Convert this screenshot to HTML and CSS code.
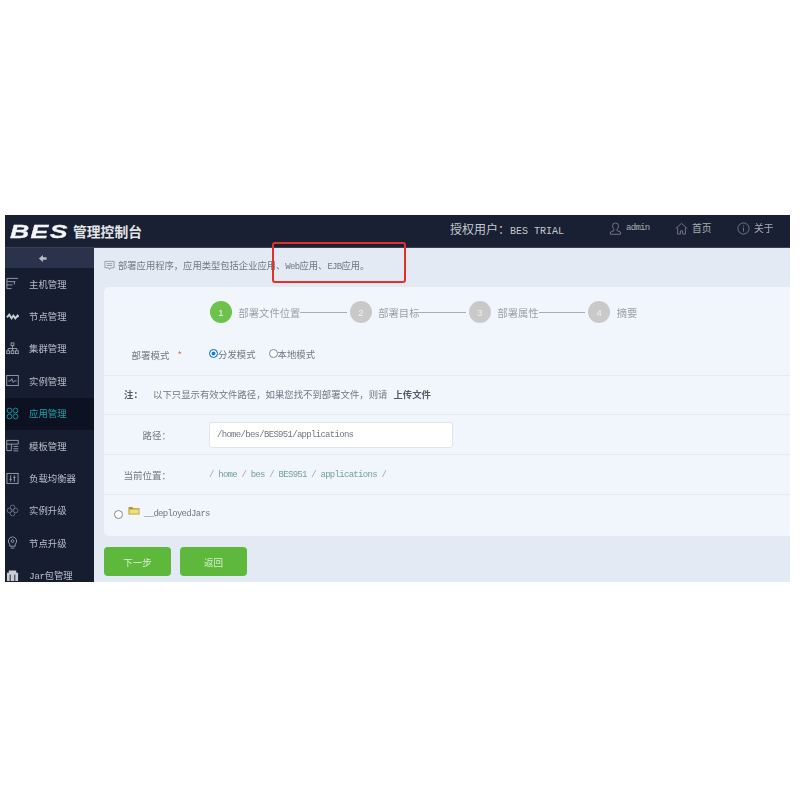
FILE: index.html
```html
<!DOCTYPE html>
<html lang="zh-CN">
<head>
<meta charset="utf-8">
<title>BES 管理控制台</title>
<link rel="stylesheet" href="styles.css">
</head>
<body>
<div class="frame">
  <header class="top">
    <div class="brand"><span class="logo">BES</span><span class="brand-name">管理控制台</span></div>
    <div class="licence">授权用户：<span class="lat-lg">BES TRIAL</span></div>
    <div class="top-link link-user">
      <svg class="ti" viewBox="0 0 14 14"><path d="M7 1a3.2 3.2 0 0 0-3.2 3.2c0 1.6.7 3 1.6 3.8v1.3L1.500 10.800v2.400h11v-2.400L8.600 9.300V8c.9-.8 1.600-2.200 1.600-3.800A3.200 3.200 0 0 0 7 1z"/></svg>
      <span class="lat">admin</span>
    </div>
    <div class="top-link link-home">
      <svg class="ti" viewBox="0 0 14 14"><path d="M.8 7 7 1.500 13.200 7M2.800 6v7h3V9.500h2.400V13h3V6"/></svg>
      <span>首页</span>
    </div>
    <div class="top-link link-about">
      <svg class="ti" viewBox="0 0 14 14"><circle cx="7" cy="7" r="6"/><path d="M7 6v4.200M7 3.600v1.200"/></svg>
      <span>关于</span>
    </div>
  </header>
  <div class="body-row">
    <nav class="side">
      <div class="collapse"><svg class="back" viewBox="0 0 10 10"><path d="M5.500 1 1 5l4.500 4V6.500h4v-3h-4z"/></svg></div>
      <a class="nav-item"><svg class="ni" viewBox="0 0 14 14"><path d="M1 1.500h12M1 1.500v11h5M1 5h9M1 8.500h6M9 5v3"/></svg><span>主机管理</span></a>
      <a class="nav-item"><svg class="ni filled" viewBox="0 0 14 14"><path d="M1 8l2.500-3 2.500 4 2-3 2 3 2.500-3 1 1.500"/></svg><span>节点管理</span></a>
      <a class="nav-item"><svg class="ni" viewBox="0 0 14 14"><rect x="5.500" y="1" width="3" height="3"/><rect x=".8" y="9.500" width="3" height="3"/><rect x="5.500" y="9.500" width="3" height="3"/><rect x="10.200" y="9.500" width="3" height="3"/><path d="M7 4v5.500M2.300 9.500V7h9.400v2.500"/></svg><span>集群管理</span></a>
      <a class="nav-item"><svg class="ni" viewBox="0 0 14 14"><rect x=".8" y="1.500" width="12.400" height="11"/><path d="M2.500 7.500h2.500l1.300-2.500 1.500 4 1.200-1.500h2.500"/></svg><span>实例管理</span></a>
      <a class="nav-item active"><svg class="ni" viewBox="0 0 14 14"><circle cx="3.800" cy="3.800" r="2.600"/><circle cx="10.200" cy="3.800" r="2.600"/><circle cx="3.800" cy="10.200" r="2.600"/><circle cx="10.200" cy="10.200" r="2.600"/></svg><span>应用管理</span></a>
      <a class="nav-item"><svg class="ni" viewBox="0 0 14 14"><path d="M.8 1.500h12.400v4H.8zM.8 5.500v7h5v-7M8 8h5.200M8 10.500h5.200M8 12.800h5.200"/></svg><span>模板管理</span></a>
      <a class="nav-item"><svg class="ni" viewBox="0 0 14 14"><rect x="1" y="1.500" width="12" height="11"/><path d="M5 3.500v7M9 3.500v7M3.800 8h2.400M7.800 6h2.400"/></svg><span>负载均衡器</span></a>
      <a class="nav-item"><svg class="ni dim" viewBox="0 0 14 14"><circle cx="7" cy="3.700" r="2.500"/><circle cx="7" cy="10.300" r="2.500"/><circle cx="3.700" cy="7" r="2.500"/><circle cx="10.300" cy="7" r="2.500"/></svg><span>实例升级</span></a>
      <a class="nav-item"><svg class="ni" viewBox="0 0 14 14"><path d="M7 1a4.500 4.500 0 0 0-3 7.800V11h6V8.800A4.500 4.500 0 0 0 7 1zM5 13h4"/><circle cx="7" cy="5.500" r="1.500"/></svg><span>节点升级</span></a>
      <a class="nav-item"><svg class="ni solid" viewBox="0 0 14 14"><path d="M1 4h12v9H1zM3 1.500h8V4H3z"/><path class="gap" d="M4.500 6v7M9.500 6v7"/></svg><span><span class="lat-nav">Jar</span>包管理</span></a>
    </nav>
    <main class="content">
      <div class="notice">
        <svg class="notice-ico" viewBox="0 0 12 12"><path d="M1 1.500h10v7H7L6 10.500 5 8.500H1zM3 4h6M3 6h6"/></svg>
        <span>部署应用程序，应用类型包括企业应用、<span class="lat">Web</span>应用、<span class="lat">EJB</span>应用。</span>
      </div>
      <section class="card">
        <div class="steps">
          <span class="dot on">1</span><span class="step-text">部署文件位置</span><span class="line"></span>
          <span class="dot">2</span><span class="step-text">部署目标</span><span class="line"></span>
          <span class="dot">3</span><span class="step-text">部署属性</span><span class="line"></span>
          <span class="dot">4</span><span class="step-text">摘要</span>
        </div>
        <div class="row row-mode">
          <div class="label mode-label">部署模式<span class="star">*</span></div>
          <div class="radios">
            <span class="radio checked"></span><span class="radio-text">分发模式</span>
            <span class="radio second"></span><span class="radio-text">本地模式</span>
          </div>
        </div>
        <div class="row row-note">
          <b class="note-tag">注：</b>
          <span>以下只显示有效文件路径，如果您找不到部署文件，则请</span>
          <b class="upload">上传文件</b>
        </div>
        <div class="row row-path">
          <div class="label">路径：</div>
          <div class="path-input"><span class="lat">/home/bes/BES951/applications</span></div>
        </div>
        <div class="row row-crumb">
          <div class="label">当前位置：</div>
          <div class="crumbs lat"><i>/</i><span>home</span><i>/</i><span>bes</span><i>/</i><span>BES951</span><i>/</i><span>applications</span><i>/</i></div>
        </div>
        <div class="row-file">
          <span class="radio"></span>
          <svg class="folder" viewBox="0 0 12 9"><path class="f-back" d="M.5 8.500V1h4l1 1.200h6v6.300z"/><path class="f-front" d="M1.500 3.500h9.200v4.200H1.500z"/></svg>
          <span class="lat">__deployedJars</span>
        </div>
      </section>
      <div class="actions">
        <button class="btn">下一步</button>
        <button class="btn">返回</button>
      </div>
    </main>
  </div>
  <div class="highlight"></div>
</div>
</body>
</html>
```
FILE: styles.css
```css
* { box-sizing: border-box; }
html, body { height: 100%; }
body {
  margin: 0;
  padding: 215px 10px 0 5px;
  background: #fff;
  font-family: "Noto Sans CJK SC", "Liberation Mono", monospace;
  font-size: 9.500px;
  color: #727880;
}
.lat { font-family: "Liberation Mono", monospace; font-size: 9px; letter-spacing: -.7px; }
.lat-nav { font-family: "Liberation Mono", monospace; font-size: 9.500px; letter-spacing: -.5px; }
.lat-lg { font-family: "Liberation Mono", monospace; font-size: 10px; }

.frame {
  position: relative;
  width: 785px;
  height: 367px;
  overflow: hidden;
  display: flex;
  flex-direction: column;
  filter: blur(.3px);
}

/* header */
.top {
  flex: none;
  height: 33px;
  background: #1a2033;
  border-bottom: 1px solid #3a4050;
  display: flex;
  align-items: center;
  color: #c4c8ce;
}
.brand { display: flex; align-items: center; width: 445px; padding-left: 5px; }
.logo {
  display: inline-block;
  width: 58px;
  font: italic 700 19px/1 "Liberation Sans", sans-serif;
  letter-spacing: 1px;
  color: #f4f5f7;
  transform: scaleX(1.400);
  transform-origin: left center;
  -webkit-text-stroke: .3px #f4f5f7;
}
.brand-name { margin-left: 5px; font-size: 13.800px; font-weight: 700; color: #e2e4e8; }
.licence { width: 159px; margin-bottom: 6px; font-size: 12px; }
.top-link { display: flex; align-items: center; gap: 4px; margin-bottom: 6px; font-size: 9.800px; color: #a9adb5; }
.link-user { width: 66px; }
.link-home { width: 62px; }
.ti { width: 13px; height: 13px; fill: none; stroke: #8b909a; stroke-width: .8; }

/* body */
.body-row { flex: 1; display: flex; min-height: 0; }
.side { flex: none; width: 89px; background: #171d30; overflow: hidden; }
.collapse {
  height: 20px;
  background: #2a324c;
  padding-left: 33px;
  display: flex;
  align-items: center;
}
.back { width: 9px; height: 9px; fill: #b7bcc6; }
.nav-item {
  height: 32.400px;
  display: flex;
  align-items: center;
  padding: 0 0 1px 1px;
  font-size: 9.400px;
  color: #b9bdc5;
}
.ni {
  flex: none;
  width: 13px;
  height: 13px;
  margin-right: 10px;
  fill: none;
  stroke: #a7abb3;
  stroke-width: .9;
}
.ni.filled { stroke-width: 2; stroke: #c9cdd3; }
.ni.dim { stroke: #6d7482; }
.ni.solid { fill: #c9cdd3; stroke: none; }
.ni .gap { stroke: #171d30; stroke-width: 1; }
.nav-item.active { background: #0d1222; color: #15a3ac; }
.active .ni { stroke: #14a6ad; }

/* content */
.content {
  flex: 1;
  min-width: 0;
  background: #e4eaf4;
  padding: 0 0 0 10px;
  display: flex;
  flex-direction: column;
}
.notice {
  flex: none;
  height: 39px;
  display: flex;
  align-items: center;
  gap: 3px;
  padding-bottom: 5px;
  font-size: 9.300px;
}
.notice-ico { width: 11px; height: 11px; fill: none; stroke: #7e858f; stroke-width: .8; }
.card {
  flex: none;
  height: 249px;
  background: #f1f5fc;
  border-radius: 5px 0 0 5px;
  display: flex;
  flex-direction: column;
}
.steps {
  flex: none;
  height: 50px;
  padding-left: 106px;
  display: flex;
  align-items: center;
  color: #9a9fa6;
  font-size: 10.300px;
}
.dot {
  flex: none;
  width: 22px;
  height: 22px;
  border-radius: 50%;
  background: #c9c9c9;
  color: #f1f1f1;
  display: flex;
  align-items: center;
  justify-content: center;
  font: 9.500px "Liberation Sans", sans-serif;
}
.dot.on { background: #6cc24a; }
.step-text { margin-left: 6.500px; white-space: nowrap; }
.line { flex: none; width: 46.500px; height: 1px; margin-right: 3px; background: #a3aeba; }

.row { display: flex; align-items: center; border-bottom: 1px solid #e6ebf3; }
.label { flex: none; width: 105px; padding-right: 38px; text-align: right; white-space: nowrap; }
.row-mode { height: 39px; padding-bottom: 3px; }
.mode-label { padding-right: 27px; }
.star { color: #d9694f; margin-left: 8px; }
.radios { display: flex; align-items: center; font-size: 9.400px; margin-top: -2px; }
.radio {
  flex: none;
  display: inline-block;
  width: 9px;
  height: 9px;
  border: 1px solid #888;
  border-radius: 50%;
  background: #fff;
}
.radio.checked { border: 1px solid #1f7ad6; box-shadow: inset 0 0 0 1.500px #fff; background: #1f7ad6; }
.radio.second { margin-left: 13px; }
.row-note { height: 39px; padding: 0 0 2px 20px; font-size: 9.400px; }
.note-tag { width: 29px; color: #555b62; }
.upload { margin-left: 6px; color: #555b62; }
.row-path { height: 40px; }
.path-input {
  width: 244px;
  height: 26px;
  background: #fff;
  border: 1px solid #dfe4ec;
  border-radius: 3px;
  display: flex;
  align-items: center;
  padding-left: 7px;
}
.row-crumb { height: 40px; }
.crumbs { display: flex; gap: 4.500px; color: #75a0a0; }
.crumbs i { font-style: normal; color: #a0a6ad; }
.row-file {
  flex: 1;
  display: flex;
  align-items: center;
  padding: 0 0 4px 10px;
}
.row-file .radio { margin-top: 2px; }
.folder { width: 12px; height: 9px; margin: -7px 4px 0 5px; }
.f-back { fill: #b99a2e; }
.f-front { fill: #f2df7a; }

.actions { flex: none; display: flex; gap: 9px; padding-top: 11px; }
.btn {
  width: 67px;
  height: 29px;
  border: 0;
  border-radius: 4px;
  background: #5db83b;
  color: #dcefd4;
  font: 9.500px "Noto Sans CJK SC", sans-serif;
}

/* annotation drawn over the screenshot */
.highlight {
  position: absolute;
  left: 267px;
  top: 27px;
  width: 134px;
  height: 41px;
  border: 2px solid #e5302a;
  border-radius: 3px;
}
```
